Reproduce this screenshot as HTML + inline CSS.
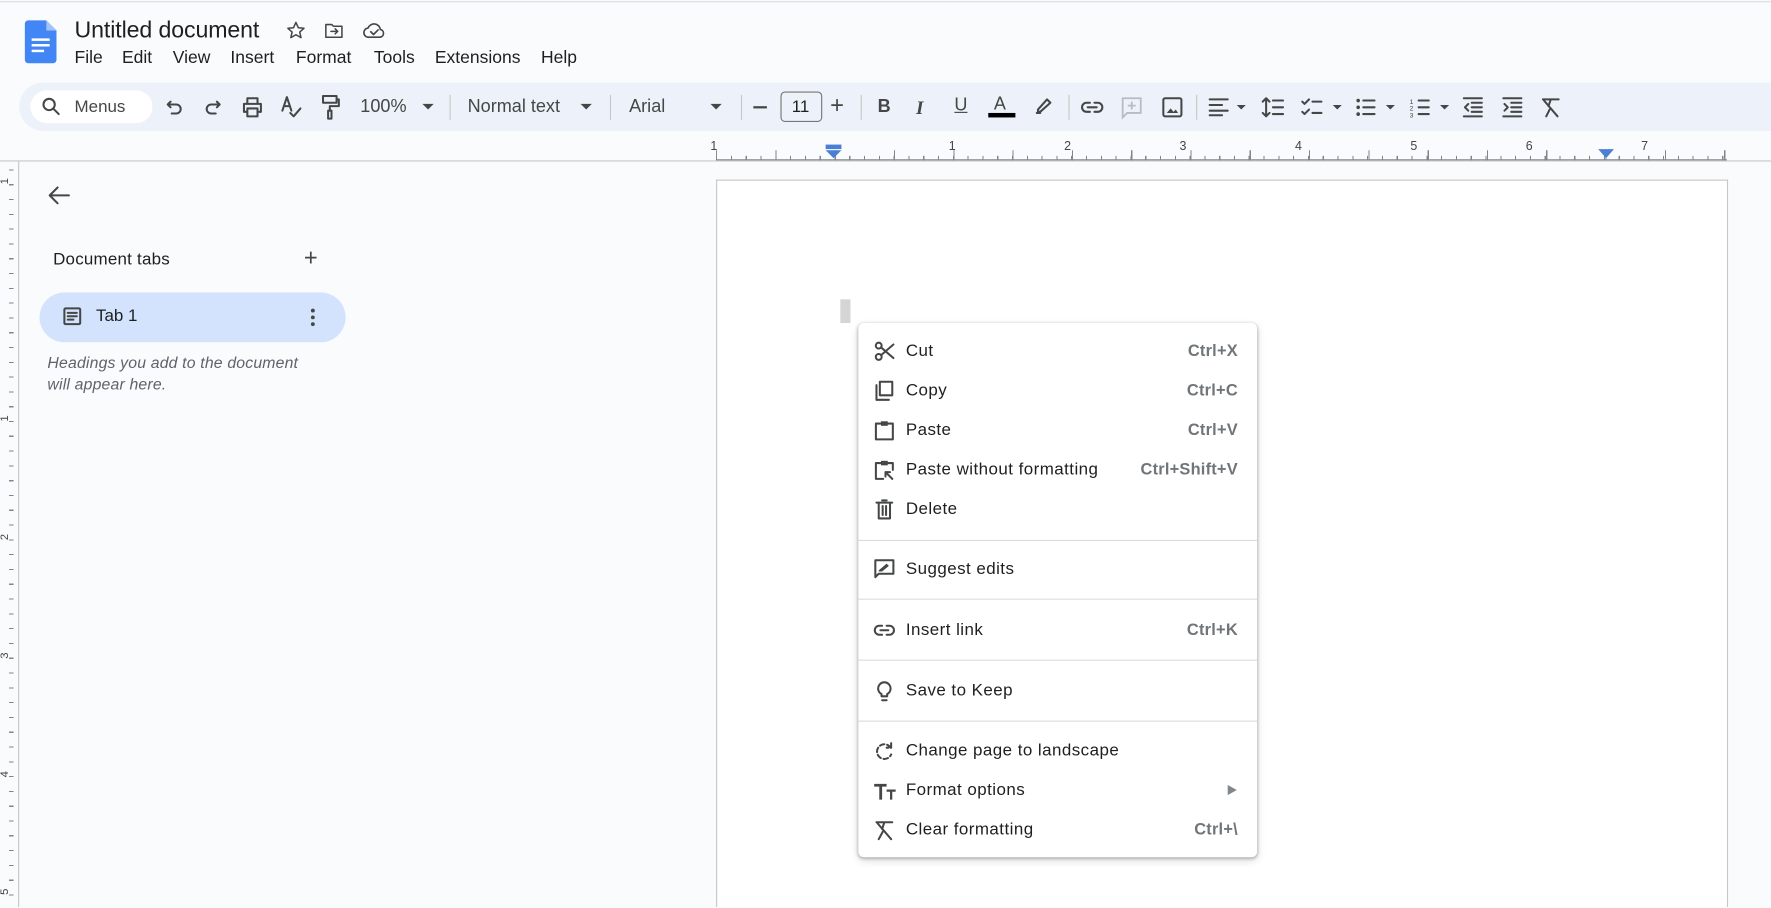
<!DOCTYPE html>
<html><head><meta charset="utf-8"><style>
*{box-sizing:border-box;margin:0;padding:0}
html,body{width:1771px;height:908px;overflow:hidden;background:#f9fbfd;font-family:"Liberation Sans",Arial,sans-serif;color:#1f1f1f}
#w{position:absolute;left:0;top:0;width:1568px;height:803px;overflow:hidden;transform:scale(1.12946);transform-origin:0 0;background:#f9fbfd}
.a{position:absolute}
.t{position:absolute;white-space:nowrap}
svg{position:absolute;overflow:visible}
.ic{fill:none;stroke:#444746;stroke-width:1.8;stroke-linecap:round;stroke-linejoin:round}
.mi{position:absolute;left:0;width:353px;height:35px}
.mi .l{position:absolute;left:42px;top:8px;font-size:15px;color:#1f1f1f;letter-spacing:.4px}
.mi .r{position:absolute;right:17px;top:9px;font-size:14.5px;color:#70757a;font-weight:bold;letter-spacing:.2px}
.mi svg{left:14px;top:8px}
.sep{position:absolute;left:0;width:353px;height:1px;background:#dadce0}
.tb{position:absolute;top:86px;font-size:16px;color:#444746}
.mb{position:absolute;top:43px;font-size:15.5px;color:#1f1f1f}
</style></head><body><div id="w">
<div class="a" style="left:0;top:1px;width:1568px;height:1px;background:#dadce0"></div>
<svg style="left:22px;top:18px" width="28" height="38" viewBox="0 0 28 38"><path d="M3 0h16l9 9v26a3 3 0 0 1-3 3H3a3 3 0 0 1-3-3V3a3 3 0 0 1 3-3z" fill="#4285f4"/><path d="M19 0v9h9z" fill="#a1c2fa"/><rect x="6" y="16" width="16" height="2.2" fill="#fff"/><rect x="6" y="21" width="16" height="2.2" fill="#fff"/><rect x="6" y="26" width="11" height="2.2" fill="#fff"/></svg>
<div class="t" style="left:66px;top:15px;font-size:20.5px;color:#1f1f1f;letter-spacing:-.1px">Untitled document</div>
<svg style="left:253px;top:18px" width="18" height="18" viewBox="0 0 24 24"><path class="ic" d="M12 2.5l2.9 6.3 6.6.6-5 4.4 1.5 6.6L12 17l-6 3.4 1.5-6.6-5-4.4 6.6-.6z"/></svg>
<svg style="left:287px;top:19px" width="18" height="16" viewBox="0 0 24 20"><path class="ic" d="M2 3h7l2 2h10v13H2z M8 11h8 M13 8l3 3-3 3"/></svg>
<svg style="left:321px;top:18px" width="21" height="17" viewBox="0 0 26 20"><path class="ic" d="M7 18a5 5 0 0 1-1-10 7 7 0 0 1 13.5 1.5A4.3 4.3 0 0 1 19 18z M9 12l3 3 5-5"/></svg>
<div class="mb" style="left:66px">File</div>
<div class="mb" style="left:108px">Edit</div>
<div class="mb" style="left:153px">View</div>
<div class="mb" style="left:204px">Insert</div>
<div class="mb" style="left:262px">Format</div>
<div class="mb" style="left:331px">Tools</div>
<div class="mb" style="left:385px">Extensions</div>
<div class="mb" style="left:479px">Help</div>
<div class="a" style="left:17px;top:73px;width:1551px;height:43px;background:#edf2fa;border-radius:22px 0 0 22px"></div>
<div class="a" style="left:27px;top:80px;width:108px;height:29px;background:#fff;border-radius:15px"></div>
<svg style="left:37px;top:86px" width="16" height="16" viewBox="0 0 16 16"><circle class="ic" cx="6.5" cy="6.5" r="5"/><path class="ic" d="M10 10l5 5"/></svg>
<div class="t" style="left:66px;top:86px;font-size:15px;color:#444746">Menus</div>
<svg style="left:147px;top:87px" width="16" height="16" viewBox="0 0 16 16"><path class="ic" d="M4 3L1.5 5.5 4 8 M2 5.5h7a4 4 0 0 1 0 8H5"/></svg>
<svg style="left:180px;top:87px" width="16" height="16" viewBox="0 0 16 16"><path class="ic" d="M12 3l2.5 2.5L12 8 M14 5.5H7a4 4 0 0 0 0 8h4"/></svg>
<svg style="left:214px;top:86px" width="19" height="18" viewBox="0 0 19 18"><path class="ic" d="M5 6V1h9v5 M2 6h15v7h-3 M5 13H2V6 M5 10h9v7H5z"/></svg>
<svg style="left:249px;top:85px" width="18" height="20" viewBox="0 0 18 20"><path class="ic" d="M1 13L5 1l4 12 M2.5 9h5 M8 15l3 3 6-7"/></svg>
<svg style="left:284px;top:84px" width="17" height="22" viewBox="0 0 17 22"><path class="ic" d="M2 1h12v6H2z M14 4h2v6H8v4 M6.5 14h3v7h-3z"/></svg>
<div class="tb" style="left:319px">100%</div>
<svg style="left:374px;top:92px" width="10" height="6"><path d="M0 0h10L5 5z" fill="#444746"/></svg>
<div class="a" style="left:398px;top:84px;width:1px;height:22px;background:#c7c7c7"></div>
<div class="tb" style="left:414px">Normal text</div>
<svg style="left:514px;top:92px" width="10" height="6"><path d="M0 0h10L5 5z" fill="#444746"/></svg>
<div class="a" style="left:540px;top:84px;width:1px;height:22px;background:#c7c7c7"></div>
<div class="tb" style="left:557px">Arial</div>
<svg style="left:629px;top:92px" width="10" height="6"><path d="M0 0h10L5 5z" fill="#444746"/></svg>
<div class="a" style="left:656px;top:84px;width:1px;height:22px;background:#c7c7c7"></div>
<div class="a" style="left:667px;top:94px;width:12px;height:1.6px;background:#444746"></div>
<div class="a" style="left:691px;top:81px;width:37px;height:27px;border:1px solid #747775;border-radius:4px"></div>
<div class="t" style="left:701px;top:86px;font-size:15px;color:#1f1f1f">11</div>
<div class="t" style="left:735px;top:82px;font-size:21px;color:#444746;font-weight:300">+</div>
<div class="a" style="left:762px;top:84px;width:1px;height:22px;background:#c7c7c7"></div>
<div class="t" style="left:777px;top:86px;font-size:16px;font-weight:bold;color:#444746">B</div>
<div class="t" style="left:811px;top:86px;font-size:17px;font-style:italic;font-weight:bold;color:#444746;font-family:'Liberation Serif',serif">I</div>
<div class="t" style="left:845px;top:85px;font-size:16px;color:#444746;text-decoration:underline">U</div>
<div class="t" style="left:880px;top:84px;font-size:16px;color:#444746">A</div>
<div class="a" style="left:875px;top:100px;width:24px;height:4px;background:#000"></div>
<svg style="left:916px;top:85px" width="16" height="16" viewBox="0 0 16 16"><path class="ic" d="M3 12l8-9 3 3-9 8H3z M2 15h3"/></svg>
<div class="a" style="left:946px;top:84px;width:1px;height:22px;background:#c7c7c7"></div>
<svg style="left:957px;top:89px" width="20" height="12" viewBox="0 0 20 12"><path class="ic" d="M8 2H5a4 4 0 0 0 0 8h3 M12 2h3a4 4 0 0 1 0 8h-3 M6 6h8"/></svg>
<svg style="left:992px;top:85px" width="20" height="20" viewBox="0 0 20 20"><path d="M2 2h16v13H6l-4 4z M10 5v7 M6.5 8.5h7" fill="none" stroke="#b8bcc2" stroke-width="1.6"/></svg>
<svg style="left:1029px;top:86px" width="18" height="18" viewBox="0 0 18 18"><rect class="ic" x="1" y="1" width="16" height="16" rx="1.5"/><path d="M4 14l3.5-4 2.5 3 2-2 2 3z" fill="#444746"/></svg>
<div class="a" style="left:1059px;top:84px;width:1px;height:22px;background:#c7c7c7"></div>
<svg style="left:1070px;top:87px" width="36" height="16" viewBox="0 0 36 16"><path class="ic" d="M1 1h16 M1 6h11 M1 11h16 M1 15h11"/><path d="M25 6h8l-4 4z" fill="#444746"/></svg>
<svg style="left:1117px;top:86px" width="20" height="18" viewBox="0 0 20 18"><path class="ic" d="M4 1v16 M1 4l3-3 3 3 M1 14l3 3 3-3 M10 3h9 M10 9h9 M10 15h9"/></svg>
<svg style="left:1152px;top:86px" width="38" height="18" viewBox="0 0 38 18"><path class="ic" d="M1 4l2 2 4-4 M1 13l2 2 4-4 M10 4h8 M10 14h8"/><path d="M28 7h8l-4 4z" fill="#444746"/></svg>
<svg style="left:1200px;top:86px" width="38" height="18" viewBox="0 0 38 18"><circle cx="2.5" cy="3" r="1.6" fill="#444746"/><circle cx="2.5" cy="9" r="1.6" fill="#444746"/><circle cx="2.5" cy="15" r="1.6" fill="#444746"/><path class="ic" d="M7 3h10 M7 9h10 M7 15h10"/><path d="M27 7h8l-4 4z" fill="#444746"/></svg>
<svg style="left:1248px;top:85px" width="38" height="20" viewBox="0 0 38 20"><path class="ic" d="M8 4h9 M8 10h9 M8 16h9" /><text x="0" y="7" font-size="6" fill="#444746">1</text><text x="0" y="13" font-size="6" fill="#444746">2</text><text x="0" y="19" font-size="6" fill="#444746">3</text><path d="M27 8h8l-4 4z" fill="#444746"/></svg>
<svg style="left:1295px;top:86px" width="18" height="18" viewBox="0 0 18 18"><path class="ic" d="M1 1h16 M8 5h9 M8 9h9 M8 13h9 M1 17h16 M5 6l-3 3 3 3"/></svg>
<svg style="left:1330px;top:86px" width="18" height="18" viewBox="0 0 18 18"><path class="ic" d="M1 1h16 M8 5h9 M8 9h9 M8 13h9 M1 17h16 M2 6l3 3-3 3"/></svg>
<svg style="left:1364px;top:86px" width="18" height="18" viewBox="0 0 18 18"><path class="ic" d="M2 2h14 M9 2L7 8 M3 3l12 14 M5 17l3-6"/></svg>
<div class="a" style="left:0;top:142px;width:1568px;height:1px;background:#c7c7c7"></div>
<div class="a" style="left:634px;top:138px;width:895px;height:4px;background:repeating-linear-gradient(90deg,#80868b 0 1px,transparent 1px 13.1px)"></div>
<div class="a" style="left:634px;top:133px;width:895px;height:9px;background:repeating-linear-gradient(90deg,#80868b 0 1px,transparent 1px 52.5px)"></div>
<div class="a" style="left:634px;top:141px;width:895px;height:1px;background:#80868b"></div>
<div class="t" style="left:629px;top:124px;font-size:11px;color:#444">1</div>
<div class="t" style="left:840px;top:124px;font-size:11px;color:#444;word-spacing:93px">1 2 3 4 5 6 7</div>
<svg style="left:731px;top:128px" width="14" height="12"><rect x="0" y="0" width="14" height="4" fill="#4a7fd6"/><path d="M0 5h14L7 12z" fill="#4a7fd6"/></svg>
<svg style="left:1415px;top:132px" width="14" height="8"><path d="M0 0h14L7 8z" fill="#4a7fd6"/></svg>
<div class="a" style="left:16px;top:142px;width:1px;height:661px;background:#c7c7c7"></div>
<div class="a" style="left:8px;top:150px;width:4px;height:653px;background:repeating-linear-gradient(180deg,#80868b 0 1px,transparent 1px 13.1px)"></div>
<div class="t" style="left:2px;top:155px;font-size:10px;color:#444;transform:rotate(-90deg)">1</div>
<div class="t" style="left:2px;top:365px;font-size:10px;color:#444;transform:rotate(-90deg)">1</div>
<div class="t" style="left:2px;top:470px;font-size:10px;color:#444;transform:rotate(-90deg)">2</div>
<div class="t" style="left:2px;top:575px;font-size:10px;color:#444;transform:rotate(-90deg)">3</div>
<div class="t" style="left:2px;top:680px;font-size:10px;color:#444;transform:rotate(-90deg)">4</div>
<div class="t" style="left:2px;top:784px;font-size:10px;color:#444;transform:rotate(-90deg)">5</div>
<svg style="left:43px;top:165px" width="19" height="16" viewBox="0 0 19 16"><path class="ic" d="M18 8H2 M8 1L1 8l7 7" stroke="#1f1f1f"/></svg>
<div class="t" style="left:47px;top:221px;font-size:15px;color:#1f1f1f;letter-spacing:.2px">Document tabs</div>
<div class="t" style="left:269px;top:217px;font-size:21px;color:#444746;font-weight:300">+</div>
<div class="a" style="left:35px;top:259px;width:271px;height:44px;background:#d3e3fd;border-radius:22px"></div>
<svg style="left:56px;top:272px" width="16" height="16" viewBox="0 0 16 16"><rect class="ic" x="1" y="1" width="14" height="14" rx="1" stroke="#1f1f1f"/><path class="ic" d="M4 5h8 M4 8h8 M4 11h5" stroke="#1f1f1f"/></svg>
<div class="t" style="left:85px;top:271px;font-size:15px;color:#1f1f1f">Tab 1</div>
<svg style="left:275px;top:273px" width="4" height="16"><circle cx="2" cy="2" r="1.7" fill="#444746"/><circle cx="2" cy="8" r="1.7" fill="#444746"/><circle cx="2" cy="14" r="1.7" fill="#444746"/></svg>
<div class="t" style="left:42px;top:312px;font-size:14px;color:#5f6368;font-style:italic;line-height:19px;letter-spacing:.15px">Headings you add to the document<br>will appear here.</div>
<div class="a" style="left:634px;top:159px;width:896px;height:644px;background:#fff;border:1px solid #c7c7c7;border-bottom:none"></div>
<div class="a" style="left:744px;top:265px;width:9px;height:21px;background:#d5d5d5"></div>
<div class="a" style="left:760px;top:286px;width:353px;height:473px;background:#fff;border-radius:5px;box-shadow:0 1px 3px rgba(0,0,0,.3),0 3px 8px rgba(0,0,0,.12)">
 <div class="mi" style="top:8px"><svg width="18" height="18" viewBox="0 0 18 18"><circle class="ic" cx="4" cy="4" r="2.6"/><circle class="ic" cx="4" cy="14" r="2.6"/><path class="ic" d="M6 5.5L17 15 M6 12.5L17 3"/></svg><span class="l">Cut</span><span class="r">Ctrl+X</span></div>
 <div class="mi" style="top:43px"><svg width="18" height="18" viewBox="0 0 18 18"><path class="ic" d="M5 1h11v12H5z M2 4v13h11"/></svg><span class="l">Copy</span><span class="r">Ctrl+C</span></div>
 <div class="mi" style="top:78px"><svg width="18" height="18" viewBox="0 0 18 18"><path class="ic" d="M1.5 3h15v14h-15z"/><rect x="6" y="1" width="6" height="4" fill="#444746"/></svg><span class="l">Paste</span><span class="r">Ctrl+V</span></div>
 <div class="mi" style="top:113px"><svg width="18" height="18" viewBox="0 0 18 18"><path class="ic" d="M8 17H1.5V3h15v6 M10 11l6 6 M10 11h4 M10 11v4"/><rect x="6" y="1" width="6" height="4" fill="#444746"/></svg><span class="l">Paste without formatting</span><span class="r">Ctrl+Shift+V</span></div>
 <div class="mi" style="top:148px"><svg width="18" height="18" viewBox="0 0 18 18"><path class="ic" d="M2 3h14 M4 3v14h10V3 M7 1h4 M7.5 6v8 M10.5 6v8"/></svg><span class="l">Delete</span></div>
 <div class="sep" style="top:192px"></div>
 <div class="mi" style="top:201px"><svg width="18" height="18" viewBox="0 0 18 18"><path class="ic" d="M1 1h16v12H4l-3 3z"/><path d="M4 10l7-6 2 2-6 5H4z" fill="#444746"/></svg><span class="l">Suggest edits</span></div>
 <div class="sep" style="top:244px"></div>
 <div class="mi" style="top:255px"><svg width="18" height="18" viewBox="0 0 18 18"><path class="ic" d="M7 5H4.5a4 4 0 0 0 0 8H7 M11 5h2.5a4 4 0 0 1 0 8H11 M5.5 9h7"/></svg><span class="l">Insert link</span><span class="r">Ctrl+K</span></div>
 <div class="sep" style="top:298px"></div>
 <div class="mi" style="top:309px"><svg width="18" height="18" viewBox="0 0 18 18"><path class="ic" d="M6.5 13.5v-2a5.5 5.5 0 1 1 5 0v2z M7 17h4"/></svg><span class="l">Save to Keep</span></div>
 <div class="sep" style="top:352px"></div>
 <div class="mi" style="top:362px"><svg width="18" height="18" viewBox="0 0 18 18"><path class="ic" d="M14.5 6A6.5 6.5 0 1 0 15 12 M15 2v4h-4" stroke-dasharray="4 2.5"/></svg><span class="l">Change page to landscape</span></div>
 <div class="mi" style="top:397px"><svg width="20" height="18" viewBox="0 0 20 18"><path d="M0 3h11v2.5H7V17H4.5V5.5H0z M11 8h8v2h-3v7h-2v-7h-3z" fill="#444746"/></svg><span class="l">Format options</span><svg style="left:327px;top:12px" width="8" height="9"><path d="M0 0l8 4.5L0 9z" fill="#80868b"/></svg></div>
 <div class="mi" style="top:432px"><svg width="18" height="18" viewBox="0 0 18 18"><path class="ic" d="M2 2h14 M9 2L7 8 M3 3l12 14 M4 17l3.5-6.5"/></svg><span class="l">Clear formatting</span><span class="r">Ctrl+\</span></div>
</div>
</div></body></html>
